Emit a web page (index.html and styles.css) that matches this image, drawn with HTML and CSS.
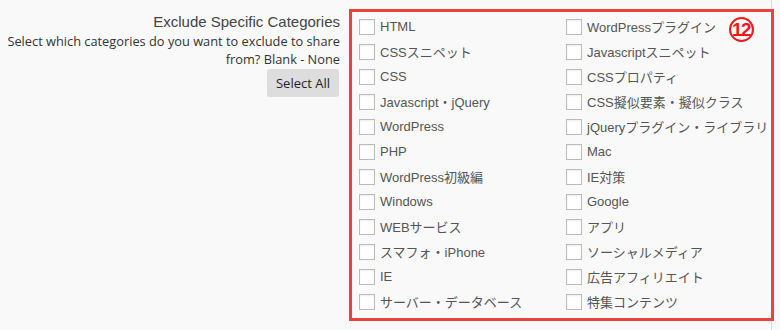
FILE: index.html
```html
<!DOCTYPE html>
<html lang="en">
<head>
    <meta charset="UTF-8">
    <title>Exclude Categories</title>
    <link rel="stylesheet" href="styles.css">
</head>
<body>
    <div class="wrap">
        <div class="label-col">
            <h3 class="title">Exclude Specific Categories</h3>
            <p class="desc">Select which categories do you want to exclude to share from? Blank - None</p>
            <button type="button" class="btn">Select All</button>
        </div>

        <div class="field">
            <form class="cat-grid">
                <label class="cat"><input type="checkbox" name="cat"> HTML</label>
                <label class="cat"><input type="checkbox" name="cat"> WordPressプラグイン</label>
                <label class="cat"><input type="checkbox" name="cat"> CSSスニペット</label>
                <label class="cat"><input type="checkbox" name="cat"> Javascriptスニペット</label>
                <label class="cat"><input type="checkbox" name="cat"> CSS</label>
                <label class="cat"><input type="checkbox" name="cat"> CSSプロパティ</label>
                <label class="cat"><input type="checkbox" name="cat"> Javascript・jQuery</label>
                <label class="cat"><input type="checkbox" name="cat"> CSS擬似要素・擬似クラス</label>
                <label class="cat"><input type="checkbox" name="cat"> WordPress</label>
                <label class="cat"><input type="checkbox" name="cat"> jQueryプラグイン・ライブラリ</label>
                <label class="cat"><input type="checkbox" name="cat"> PHP</label>
                <label class="cat"><input type="checkbox" name="cat"> Mac</label>
                <label class="cat"><input type="checkbox" name="cat"> WordPress初級編</label>
                <label class="cat"><input type="checkbox" name="cat"> IE対策</label>
                <label class="cat"><input type="checkbox" name="cat"> Windows</label>
                <label class="cat"><input type="checkbox" name="cat"> Google</label>
                <label class="cat"><input type="checkbox" name="cat"> WEBサービス</label>
                <label class="cat"><input type="checkbox" name="cat"> アプリ</label>
                <label class="cat"><input type="checkbox" name="cat"> スマフォ・iPhone</label>
                <label class="cat"><input type="checkbox" name="cat"> ソーシャルメディア</label>
                <label class="cat"><input type="checkbox" name="cat"> IE</label>
                <label class="cat"><input type="checkbox" name="cat"> 広告アフィリエイト</label>
                <label class="cat"><input type="checkbox" name="cat"> サーバー・データベース</label>
                <label class="cat"><input type="checkbox" name="cat"> 特集コンテンツ</label>
            </form>
            <span class="marker">12</span>
        </div>
    </div>
</body>
</html>
```

FILE: styles.css
```css
body {
    margin: 0;
    background-color: #f9f9f9;
    font-family: "Liberation Sans", "Noto Sans CJK JP", sans-serif;
}

.wrap {
    display: flex;
    width: 772px;
    height: 330px;
    border-right: 1px solid #dcdcdc;
    box-sizing: border-box;
    padding-top: 9px;
}

.label-col {
    width: 340px;
    flex-shrink: 0;
    text-align: right;
    padding-top: 3px;
    box-sizing: border-box;
}

.title {
    margin: 0;
    font-size: 15px;
    font-weight: normal;
    color: #444;
    line-height: 20px;
}

.desc {
    margin: 0;
    font-family: "Open Sans", sans-serif;
    font-size: 12.8px;
    line-height: 18px;
    color: #333;
}

.btn {
    margin-top: 1px;
    margin-right: 1px;
    height: 28px;
    padding: 0 9px;
    border: none;
    border-radius: 3px;
    background-color: #dddddd;
    font-family: "Open Sans", sans-serif;
    font-size: 13px;
    color: #222;
}

.field {
    position: relative;
    margin-left: 9px;
    width: 425px;
    height: 312px;
    flex-shrink: 0;
    border: 3px solid #e8433d;
    box-sizing: border-box;
    padding: 2px 0 0 7px;
}

.cat-grid {
    display: grid;
    grid-template-columns: 207px 1fr;
    grid-auto-rows: 25px;
}

.cat {
    display: flex;
    align-items: center;
    gap: 5px;
    font-size: 13px;
    color: #555;
    white-space: nowrap;
}

.cat input {
    appearance: none;
    margin: 0;
    width: 16px;
    height: 16px;
    background-color: #fff;
    border: 1px solid #bbb;
    box-shadow: inset 0 1px 2px rgba(0,0,0,0.07);
}

.marker {
    position: absolute;
    top: 5px;
    right: 17px;
    width: 25px;
    height: 25px;
    border: 2px solid #f01818;
    border-radius: 50%;
    box-sizing: border-box;
    color: #f01818;
    font-size: 19px;
    font-weight: bold;
    line-height: 21px;
    text-align: center;
    letter-spacing: -1.5px;
    text-indent: -1px;
}
```
